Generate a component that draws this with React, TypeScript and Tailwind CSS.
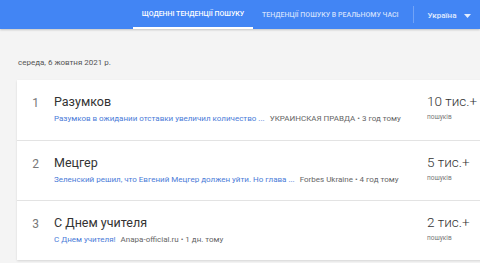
const trends = [
  {
    n: 1,
    title: 'Разумков',
    link: 'Разумков в ожидании отставки увеличил количество ...',
    source: 'УКРАИНСКАЯ ПРАВДА • 3 год тому',
    count: '10 тис.+',
  },
  {
    n: 2,
    title: 'Мецгер',
    link: 'Зеленский решил, что Евгений Мецгер должен уйти. Но глава ...',
    source: 'Forbes Ukraine • 4 год тому',
    count: '5 тис.+',
  },
  {
    n: 3,
    title: 'С Днем учителя',
    link: 'С Днем учителя!',
    source: 'Anapa-official.ru • 1 дн. тому',
    count: '2 тис.+',
  },
];

export default function App() {
  return (
    <div className="w-[480px] h-[263px] overflow-hidden bg-[#f4f4f4] font-['Roboto',sans-serif]">
      {/* Header */}
      <header className="flex h-[29px] items-stretch whitespace-nowrap bg-[#4285f4] pl-[133px] shadow-[0_1px_2px_rgba(0,0,0,0.2)]">
        <div className="flex w-[120px] items-center justify-center border-b-2 border-white pt-[2px] text-[7px] font-medium uppercase text-white">
          Щоденні тенденції пошуку
        </div>
        <div className="flex items-center pl-[9px] pr-[14px] pt-[2px] text-[7px] font-medium uppercase text-white/75">
          Тенденції пошуку в реальному часі
        </div>
        <div className="my-[6px] w-px bg-white/25" />
        <div className="flex items-center gap-[8px] pl-[14px] pt-[2px] text-[8px] font-medium text-white/85">
          Україна
          <svg width="7" height="4" viewBox="0 0 7 4">
            <path d="M0 0h7L3.5 4z" fill="rgba(255,255,255,0.85)" />
          </svg>
        </div>
      </header>

      {/* Date */}
      <div className="pl-[18px] pt-[28px] text-[8px] text-[#555]">середа, 6 жовтня 2021 р.</div>

      {/* List */}
      <div className="ml-[17px] mt-[11px] w-[480px] bg-white shadow-[0_1px_2px_rgba(0,0,0,0.12)]">
        {trends.map((t, i) => (
          <div
            key={t.n}
            className={`flex h-[60px] items-stretch ${i > 0 ? 'border-t border-[#e3e3e3]' : ''}`}
          >
            <div className="w-[37px] pt-[14px] text-center text-[12px] text-[#777]">{t.n}</div>
            <div className="w-[373px] pt-[14px]">
              <div className="text-[12.5px] leading-[16px] text-[#333]">{t.title}</div>
              <div className="mt-[3px] flex items-baseline gap-[5px] whitespace-nowrap">
                <span className="text-[8px] text-[#4a7bd8]">{t.link}</span>
                <span className="text-[8px] text-[#666]">{t.source}</span>
              </div>
            </div>
            <div className="pt-[12px]">
              <div className="text-[13.5px] font-light leading-[18px] text-[#333]">{t.count}</div>
              <div className="mt-[3px] text-[6.5px] text-[#777]">пошуків</div>
            </div>
          </div>
        ))}
      </div>
    </div>
  );
}
